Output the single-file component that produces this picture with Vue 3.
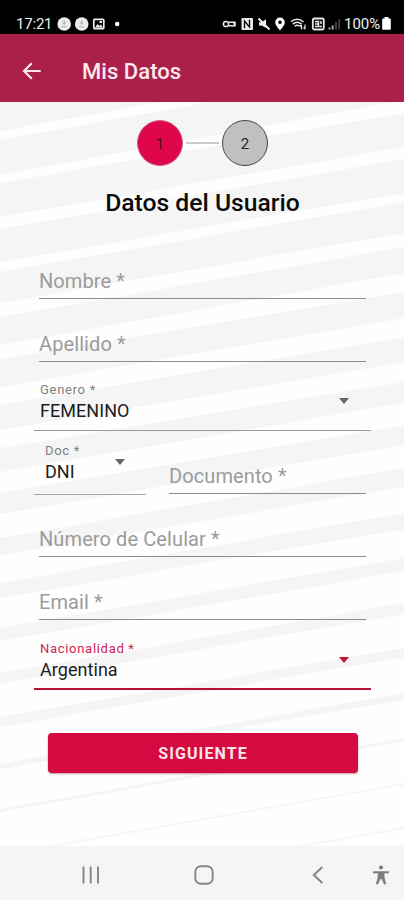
<script setup>
import { ref } from 'vue'

const step = ref(1)

// each band: left top, left bottom, right top, right bottom
const bands = [
  [95, 131, 20, 58],
  [140, 175, 67, 100],
  [183, 217, 113, 147],
  [229, 262, 159, 193],
  [272, 303, 202, 233],
  [317, 345, 247, 273],
  [359, 387, 292, 318],
  [405, 430, 337, 362],
  [448, 472, 382, 403],
  [493, 514, 425, 445],
  [538, 555, 468, 487],
  [583, 598, 513, 529],
  [628, 641, 558, 571],
  [673, 684, 603, 614],
  [717, 727, 648, 657],
  [764, 769, 693, 700],
  [809, 812, 738, 741],
  [854, 856, 783, 785],
  [898, 900, 827, 829],
]
const points = ([a, b, c, d]) => `0,${a} 404,${c} 404,${d} 0,${b}`
</script>

<template>
  <div class="screen">
    <svg class="stripes" viewBox="0 0 404 900">
      <polygon v-for="(b, i) in bands" :key="i" :points="points(b)" />
    </svg>

    <div class="status-bar">
      <span class="clock">17:21</span>
      <svg class="left-icons" width="64" height="14" viewBox="0 0 64 14">
        <circle cx="7.2" cy="7" r="6.8" fill="#ececf0" />
        <path d="M7.2 3.2v4M5.5 5.5l1.700 1.800L8.900 5.500M4.700 9.800h5" stroke="#a3a5b8" fill="none" />
        <circle cx="24.7" cy="7" r="6.8" fill="#ececf0" />
        <path d="M24.7 3.2v4M23 5.500l1.700 1.800 1.700-1.800M22.200 9.800h5" stroke="#a3a5b8" fill="none" />
        <rect x="36.8" y="2.300" width="10" height="9.400" rx="1" fill="none" stroke="#eee" stroke-width="1.700" />
        <path d="M38 10.500l2.500-3.500 2 2 1.500-1.500 2 3zM42.500 4h2.500v2h-2.500z" fill="#eee" />
        <circle cx="60.2" cy="7" r="2.300" fill="#fff" />
      </svg>
      <svg class="right-icons" width="120" height="14" viewBox="0 0 120 14">
        <g fill="none" stroke="#e8e8e8" stroke-width="1.500">
          <circle cx="4" cy="7" r="2.600" />
          <path d="M6.500 5.300h6.500v3.400h-1.500M6.800 8.700h2.700a1.800 1.800 0 1 0 2-3" />
          <path d="M69 4.800q6-5.200 12.500 0M70.800 7.100q4.200-3.600 8.800 0M72.700 9.200q2.300-2 5 0" />
          <path d="M79.500 12.500V8M78 9.500l1.500-1.700M83 7.500v4.500M81.500 10.500l1.500 1.700" stroke-width="1.200" />
          <rect x="90.800" y="1.500" width="11" height="11" rx="1.500" stroke-width="1.800" />
          <path d="M93 4.500h3.500v5h-3.500M93 7h3.500M99 4v3M97.500 9.500h2.500" />
        </g>
        <rect x="19.500" y="1" width="11.500" height="12" rx="1" fill="#e8e8e8" />
        <path d="M22.500 11.200V4l5 6V2.800" fill="none" stroke="#000" stroke-width="1.300" />
        <path d="M37 5.300h2.600L44 2.200v8.600L39.600 8.600H37z" fill="#eee" />
        <path d="M36.500 1.500l11 11" stroke="#eee" stroke-width="1.900" />
        <path d="M58 .6a4.800 4.800 0 0 0-4.800 4.800C53.200 8.500 58 13.300 58 13.300s4.800-4.800 4.800-7.900A4.800 4.800 0 0 0 58 .6z" fill="#fff" />
        <circle cx="58" cy="5.300" r="1.700" fill="#000" />
        <path d="M106.500 10.500h2v2h-2zM109.700 8.500h2v4h-2z" fill="#aaa" />
        <path d="M113 5h2v7.500h-2zM116.200 2h2v10.500h-2z" fill="#3c3c3c" />
      </svg>
      <span class="percent">100%</span>
      <svg class="battery" width="9" height="13" viewBox="0 0 9 13">
        <path d="M2.500 0h4v1.600H8q.8 0 .8.800v9.600q0 .8-.8.800H1q-.8 0-.8-.8V2.400q0-.8.800-.8h1.500z" fill="#fff" />
      </svg>
    </div>

    <header class="app-bar">
      <button class="back">
        <svg width="20" height="18" viewBox="0 0 20 18">
          <path d="M18.700 9H2.500M9.800 1.300L2 9l7.800 7.700" fill="none" stroke="#fbe9ee" stroke-width="2.200" />
        </svg>
      </button>
      <h1>Mis Datos</h1>
    </header>

    <main class="content">
      <div class="stepper">
        <div class="step" :class="{ active: step === 1 }">1</div>
        <div class="connector"></div>
        <div class="step" :class="{ active: step === 2 }">2</div>
      </div>

      <h2>Datos del Usuario</h2>

      <form class="form" @submit.prevent>
        <div class="field first">Nombre *</div>
        <div class="field">Apellido *</div>

        <div class="select wide">
          <div class="texts">
            <label>Genero *</label>
            <span class="value">FEMENINO</span>
          </div>
          <i class="caret"></i>
        </div>

        <div class="row">
          <div class="select doc">
            <div class="texts">
              <label>Doc *</label>
              <span class="value">DNI</span>
            </div>
            <i class="caret"></i>
          </div>
          <div class="field documento">Documento *</div>
        </div>

        <div class="field">Número de Celular *</div>
        <div class="field">Email *</div>

        <div class="select wide focused">
          <div class="texts">
            <label>Nacionalidad *</label>
            <span class="value">Argentina</span>
          </div>
          <i class="caret"></i>
        </div>

        <button class="submit">SIGUIENTE</button>
      </form>
    </main>

    <nav class="nav-bar">
      <svg class="recents" width="18" height="18" viewBox="0 0 18 18">
        <path d="M1.500 .5v17M8.700 .5v17M16 .5v17" stroke="#858585" stroke-width="1.900" />
      </svg>
      <svg class="home" width="20" height="20" viewBox="0 0 20 20">
        <rect x="1.300" y="1.300" width="17.400" height="17.400" rx="5.500" fill="none" stroke="#858585" stroke-width="1.900" />
      </svg>
      <svg class="prev" width="12" height="18" viewBox="0 0 12 18">
        <path d="M10.300 1L1.800 9l8.500 8" fill="none" stroke="#858585" stroke-width="2" />
      </svg>
      <svg class="access" width="18" height="20" viewBox="0 0 18 20">
        <circle cx="9" cy="2.500" r="2.100" fill="#7d7d7d" />
        <path d="M1 6.300h16v2h-4.700l.4 5 1.500 5.700-2 .6L9.500 14h-1l-2.700 5.600-2-.6 1.800-5.700.2-5H1z" fill="#7d7d7d" />
      </svg>
    </nav>
  </div>
</template>

<style>
body {
  margin: 0;
  background: #fff;
}
</style>

<style scoped>
* {
  box-sizing: border-box;
}

.screen {
  position: relative;
  width: 404px;
  height: 900px;
  display: flex;
  flex-direction: column;
  overflow: hidden;
  background: #fefefe;
  font-family: Roboto, "Liberation Sans", sans-serif;
}

.stripes {
  position: absolute;
  inset: 0;
  width: 404px;
  height: 900px;
  fill: #f5f5f5;
}

.status-bar,
.app-bar,
.content,
.nav-bar {
  position: relative;
}

/* Status bar */
.status-bar {
  height: 34px;
  padding: 13px 13px 0 16px;
  display: flex;
  align-items: center;
  background: #000;
  color: #eee;
}

.clock {
  width: 41px;
  font-size: 15px;
  line-height: 22px;
  letter-spacing: -.2px;
}

.right-icons {
  margin-left: auto;
}

.percent {
  width: 37px;
  margin-left: 2px;
  font-size: 15px;
  line-height: 22px;
}

.battery {
  margin-left: 1px;
}

/* App bar */
.app-bar {
  height: 68px;
  padding: 5px 0 0 22px;
  display: flex;
  align-items: center;
  background: #ab204a;
}

.back {
  display: flex;
  width: 60px;
  padding: 0;
  border: none;
  background: none;
}

h1 {
  margin: 2px 0 0;
  font-size: 22px;
  font-weight: 500;
  line-height: 30px;
  letter-spacing: .05px;
  color: #fbe9ee;
}

/* Stepper */
.content {
  flex: 1;
  padding-top: 18px;
}

.stepper {
  display: flex;
  align-items: center;
  justify-content: center;
  height: 46px;
  padding-left: 1px;
}

.step {
  width: 46px;
  height: 46px;
  display: flex;
  align-items: center;
  justify-content: center;
  padding-top: 1px;
  border-radius: 50%;
  border: 1px solid #444;
  background: #c0c0c0;
  color: #262626;
  font-size: 15px;
}

.step.active {
  border-color: #cf5f8d;
  background: #e0064a;
  color: #4c0820;
}

.connector {
  width: 33px;
  height: 2px;
  margin: 0 3px;
  background: #cbcbcb;
}

h2 {
  margin: 21px 0 0;
  font-size: 24.7px;
  font-weight: 500;
  line-height: 32px;
  text-align: center;
  padding-left: 1px;
  color: #0c0c0c;
}

/* Form */
.form {
  margin: 0 33px 0 34px;
  display: flex;
  flex-direction: column;
}

.field {
  height: 34px;
  margin: 29px 5px 0;
  border-bottom: 1px solid #8c8c8c;
  font-size: 20px;
  line-height: 33px;
  letter-spacing: .1px;
  color: #9b9b9b;
}

.field.first {
  margin-top: 46px;
}

.select {
  display: flex;
  justify-content: space-between;
  height: 50px;
  border-bottom: 1px solid #999;
}

.wide {
  margin-top: 19px;
  padding: 0 22px 0 6px;
}

.texts {
  display: flex;
  flex-direction: column;
}

label {
  font-size: 13px;
  line-height: 18px;
  letter-spacing: .7px;
  color: #808080;
}

.value {
  font-size: 18px;
  line-height: 24px;
  letter-spacing: .05px;
  color: #1c1c1c;
}

.caret {
  margin-top: 17px;
  width: 0;
  height: 0;
  border: 5.5px solid transparent;
  border-top: 6px solid #666;
  border-bottom: 0;
}

.row {
  display: flex;
  gap: 23px;
  height: 63px;
}

.doc {
  width: 112px;
  height: 53px;
  margin-top: 11px;
  padding: 0 21px 0 11px;
  border-bottom: 1px solid #a5a5a5;
}

.field.documento {
  flex: 1;
  margin: 29px 5px 0 0;
}

.focused {
  margin-top: 20px;
  border-bottom: 2px solid #b5122f;
}

.focused label {
  color: #cf2456;
}

.focused .caret {
  border-top-color: #c21334;
}

.submit {
  height: 40px;
  margin: 43px 13px 0 14px;
  padding: 0;
  border: none;
  border-radius: 4px;
  background: #d40a40;
  box-shadow: 0 1px 2px rgba(100, 0, 30, .4);
  color: #fbe3ea;
  font-family: inherit;
  font-size: 16px;
  font-weight: 700;
  letter-spacing: 1.1px;
}

/* Navigation bar */
.nav-bar {
  height: 54px;
  display: flex;
  align-items: center;
  padding: 3px 14px 0 82px;
  background: #f5f5f5;
}

.home {
  margin-left: 94px;
}

.prev {
  margin-left: 98px;
}

.access {
  margin-left: auto;
}
</style>
